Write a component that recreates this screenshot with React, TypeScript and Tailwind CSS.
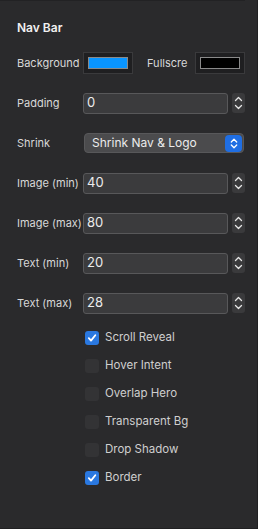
import React from 'react'

const font = { fontFamily: 'Inter, "Noto Sans", sans-serif' }

function Stepper() {
  return (
    <div className="w-[13px] h-[20px] rounded-[3px] bg-[#3a3a3c] flex flex-col items-center justify-center gap-[2px]">
      <svg width="9" height="6" viewBox="0 0 9 6" fill="none">
        <path d="M1.5 4.5 L4.5 1.5 L7.5 4.5" stroke="#e6e6e6" strokeWidth="1.3" strokeLinecap="round" strokeLinejoin="round" />
      </svg>
      <svg width="9" height="6" viewBox="0 0 9 6" fill="none">
        <path d="M1.5 1.5 L4.5 4.5 L7.5 1.5" stroke="#e6e6e6" strokeWidth="1.3" strokeLinecap="round" strokeLinejoin="round" />
      </svg>
    </div>
  )
}

function NumberRow({ label, value }: { label: string; value: string }) {
  return (
    <div className="flex items-center h-[22px]">
      <span className="w-[66px] text-[11px] text-[#d8d8d8] whitespace-nowrap">{label}</span>
      <div className="w-[145px] h-[21px] rounded-[3px] border border-[#58585a] bg-[#3b3b3d] flex items-center px-[3px] text-[13px] text-[#ececec]">
        {value}
      </div>
      <div className="ml-[4px]">
        <Stepper />
      </div>
    </div>
  )
}

function ColorWell({ color }: { color: string }) {
  return (
    <div className="w-[50px] h-[22px] bg-[#1f1f21] border border-[#3a3a3c] flex items-center justify-center">
      <div className="w-[40px] h-[12px] border border-[#8a8a8a]" style={{ backgroundColor: color }} />
    </div>
  )
}

function Check({ label, checked }: { label: string; checked?: boolean }) {
  return (
    <div className="flex items-center h-[28px]">
      {checked ? (
        <div className="w-[14px] h-[14px] rounded-[3px] bg-[#2a78e0] flex items-center justify-center">
          <svg width="10" height="10" viewBox="0 0 10 10" fill="none">
            <path d="M1.8 5.2 L4 7.6 L8.3 2.2" stroke="white" strokeWidth="1.8" strokeLinecap="round" strokeLinejoin="round" />
          </svg>
        </div>
      ) : (
        <div className="w-[14px] h-[14px] rounded-[3px] bg-[#333335]" />
      )}
      <span className="ml-[6px] text-[11.5px] text-[#cfcfcf]">{label}</span>
    </div>
  )
}

export default function App() {
  return (
    <div className="w-[258px] h-[529px] bg-[#2a2a2c] relative overflow-hidden" style={font}>
      <div className="h-px w-[245px] bg-[#222224]" />
      <div className="absolute right-0 top-0 bottom-0 w-px bg-[#202022]" />
      <div className="absolute left-0 right-0 bottom-0 h-px bg-[#202022]" />

      <div className="pl-[17px] pt-[19px] flex flex-col">
        {/* Title */}
        <div className="text-[12px] font-semibold text-[#f0f0f0] leading-[16px]">Nav Bar</div>

        <div className="mt-[16px] flex flex-col gap-[18px]">
          <div className="flex items-center h-[22px]">
            <span className="w-[66px] text-[11px] text-[#d8d8d8]">Background</span>
            <ColorWell color="#0a95ff" />
            <span className="ml-[14px] w-[48px] text-[11px] text-[#d8d8d8] overflow-hidden whitespace-nowrap">Fullscre</span>
            <ColorWell color="#000000" />
          </div>

          <NumberRow label="Padding" value="0" />

          {/* Shrink select */}
          <div className="flex items-center h-[22px]">
            <span className="w-[67px] text-[11px] text-[#d8d8d8]">Shrink</span>
            <div className="w-[160px] h-[20px] rounded-[4px] bg-[#4b4b4d] border border-[#58585a] flex items-center pl-[7px] pr-[1px]">
              <span className="flex-1 text-[12px] text-[#ececec]">Shrink Nav &amp; Logo</span>
              <div className="w-[17px] h-[17px] rounded-[4px] bg-[#1f6ee3] flex flex-col items-center justify-center gap-[1px]">
                <svg width="8" height="5" viewBox="0 0 8 5" fill="none">
                  <path d="M1.3 4 L4 1.3 L6.7 4" stroke="white" strokeWidth="1.3" strokeLinecap="round" strokeLinejoin="round" />
                </svg>
                <svg width="8" height="5" viewBox="0 0 8 5" fill="none">
                  <path d="M1.3 1 L4 3.7 L6.7 1" stroke="white" strokeWidth="1.3" strokeLinecap="round" strokeLinejoin="round" />
                </svg>
              </div>
            </div>
          </div>

          <NumberRow label="Image (min)" value="40" />
          <NumberRow label="Image (max)" value="80" />
          <NumberRow label="Text (min)" value="20" />
          <NumberRow label="Text (max)" value="28" />
        </div>

        <div className="mt-[10px] pl-[68px] flex flex-col">
          <Check label="Scroll Reveal" checked />
          <Check label="Hover Intent" />
          <Check label="Overlap Hero" />
          <Check label="Transparent Bg" />
          <Check label="Drop Shadow" />
          <Check label="Border" checked />
        </div>
      </div>
    </div>
  )
}
